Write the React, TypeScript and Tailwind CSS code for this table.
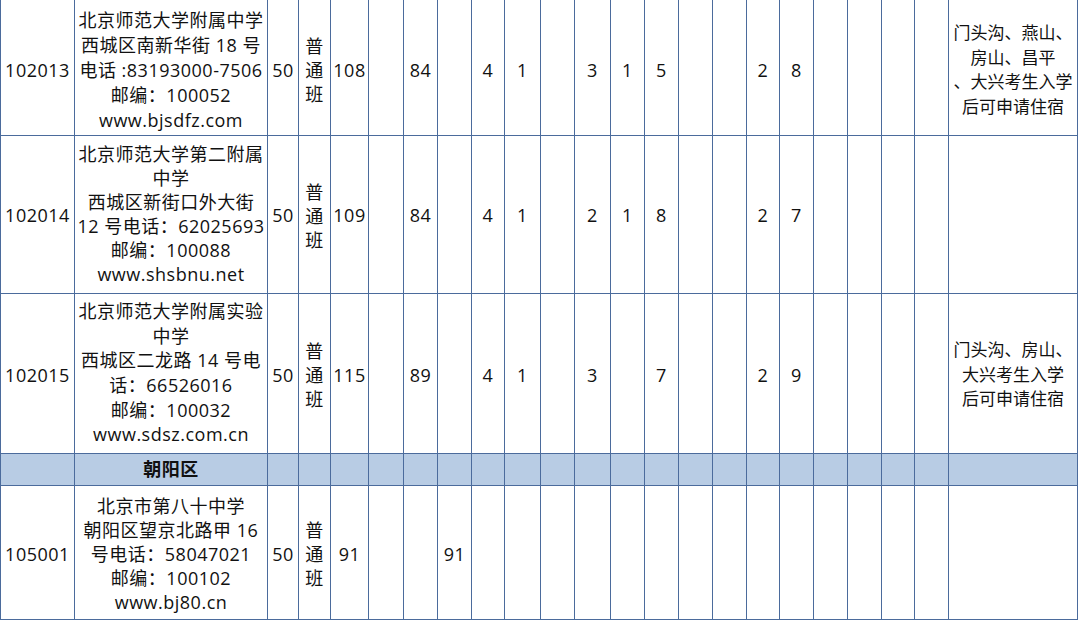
import React from 'react';

const widths = [74, 193, 31, 32, 38, 35, 34, 34, 33, 36, 34, 36, 34, 34, 34, 34, 33, 34, 34, 34, 33, 34, 129];

interface School {
  code: string;
  info: string[];
  rowCls: string;
  padCls: string;
  infoPad: string;
  lh: string;
  nums: (string | null)[];
  notes: string[];
}

const schools: School[] = [
  {
    code: '102013',
    info: ['北京师范大学附属中学', '西城区南新华街 18 号', '电话 :83193000-7506', '邮编：100052', 'www.bjsdfz.com'],
    rowCls: 'h-[135px]',
    padCls: ' pt-[6px]',
    infoPad: ' pt-[6px]',
    lh: 'leading-[25px]',
    nums: ['108', null, '84', null, '4', '1', null, '3', '1', '5', null, null, '2', '8', null, null, null, null],
    notes: ['门头沟、燕山、', '房山、昌平', '、大兴考生入学', '后可申请住宿'],
  },
  {
    code: '102014',
    info: ['北京师范大学第二附属', '中学', '西城区新街口外大街', '12 号电话：62025693', '邮编：100088', 'www.shsbnu.net'],
    rowCls: 'h-[158px]',
    padCls: ' pt-[3px]',
    infoPad: '',
    lh: 'leading-[24px]',
    nums: ['109', null, '84', null, '4', '1', null, '2', '1', '8', null, null, '2', '7', null, null, null, null],
    notes: [],
  },
  {
    code: '102015',
    info: ['北京师范大学附属实验', '中学', '西城区二龙路 14 号电', '话：66526016', '邮编：100032', 'www.sdsz.com.cn'],
    rowCls: 'h-[160px]',
    padCls: ' pt-[4px]',
    infoPad: '',
    lh: 'leading-[24.6px]',
    nums: ['115', null, '89', null, '4', '1', null, '3', null, '7', null, null, '2', '9', null, null, null, null],
    notes: ['门头沟、房山、', '大兴考生入学', '后可申请住宿'],
  },
];

const school80: School = {
  code: '105001',
  info: ['北京市第八十中学', '朝阳区望京北路甲 16', '号电话：58047021', '邮编：100102', 'www.bj80.cn'],
  rowCls: 'h-[134px]',
  padCls: ' pt-[4px]',
  infoPad: ' pt-[4px]',
  lh: 'leading-[24px]',
  nums: ['91', null, null, '91', null, null, null, null, null, null, null, null, null, null, null, null, null, null],
  notes: [],
};

const cell = 'border border-[#4b6b9c] text-center align-middle p-0';

function SchoolRow({ s, first }: { s: School; first?: boolean }) {
  const base = cell + (first ? ' border-t-0' : '');
  const c = base + s.padCls;
  return (
    <tr className={s.rowCls}>
      <td className={c}>{s.code}</td>
      <td className={base + s.infoPad}>
        {s.info.map((l, i) => (
          <div key={i} className={'whitespace-nowrap ' + s.lh}>{l}</div>
        ))}
      </td>
      <td className={c}>50</td>
      <td className={c}>
        <div className="leading-[24px]">普</div>
        <div className="leading-[24px]">通</div>
        <div className="leading-[24px]">班</div>
      </td>
      {s.nums.map((v, i) => (
        <td key={i} className={c}>{v ?? ''}</td>
      ))}
      <td className={c + ' text-[17px] tracking-normal'}>
        {s.notes.map((l, i) => (
          <div key={i} className="whitespace-nowrap leading-[24.5px]">{l}</div>
        ))}
      </td>
    </tr>
  );
}

export default function App() {
  return (
    <div className="w-[1080px] h-[620px] overflow-hidden bg-white">
      <table
        className="table-fixed border-collapse w-[1078px] text-[18px] tracking-[0.5px] text-[#111]"
        style={{ fontFamily: '"Open Sans", "Noto Sans CJK SC", sans-serif' }}
      >
        <colgroup>
          {widths.map((w, i) => (
            <col key={i} style={{ width: w }} />
          ))}
        </colgroup>
        <tbody>
          {schools.map((s, i) => (
            <SchoolRow key={s.code} s={s} first={i === 0} />
          ))}
          <tr className="h-[32px] bg-[#b8cce4]">
            <td className={cell}></td>
            <td className={cell + ' font-bold'}>朝阳区</td>
            {widths.slice(2).map((_, i) => (
              <td key={i} className={cell}></td>
            ))}
          </tr>
          <SchoolRow s={school80} />
        </tbody>
      </table>
    </div>
  );
}
